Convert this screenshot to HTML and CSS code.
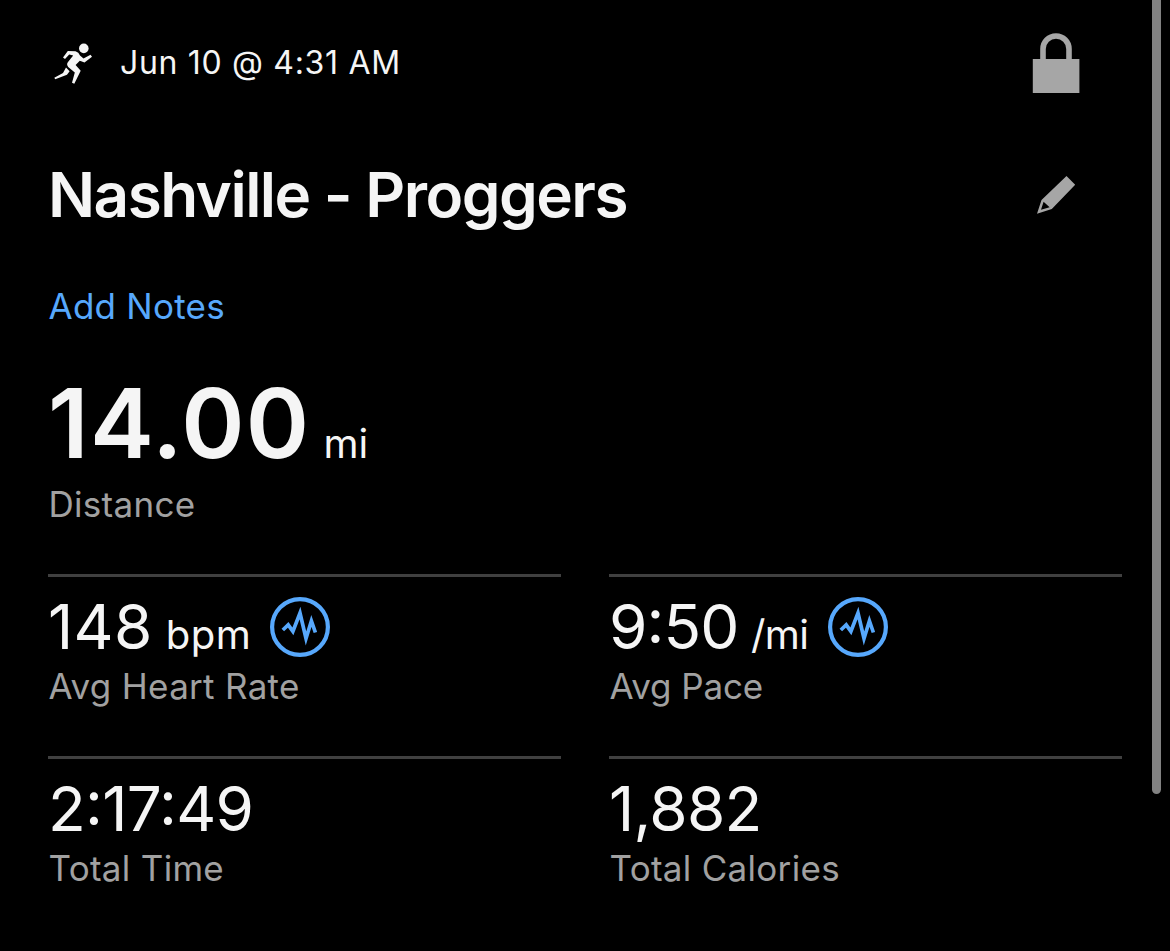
FILE: index.html
```html
<!DOCTYPE html>
<html lang="en">
<head>
<meta charset="utf-8">
<title>Nashville - Proggers</title>
<link rel="stylesheet" href="styles.css">
</head>
<body>
<main class="activity">
  <header class="meta">
    <svg class="runner" viewBox="0 0 70 65" fill="#f5f5f5">
      <circle cx="43.8" cy="17.4" r="4.8"/>
      <path d="M27.8 20 L35.5 20.2 Q38.8 21 40 24.4 L43.5 27.6 L50.5 23.8 L52 25.7 L44.5 31.6 L39.8 29.8 L35.6 34 L40.7 39.7 L34.3 52.7 L32 51.8 L34.8 41.6 L28.2 36 Q26 33.3 28.2 30.8 L33.2 24.4 L29.2 23.4 L25 28 L23 26.5 Z"/>
      <path d="M26 36.6 L29.6 40.2 L27 43.8 L15.2 48.3 L14.3 46.8 L23 42 Z"/>
    </svg>
    <span class="date">Jun 10 @ 4:31 AM</span>
    <svg class="lock" viewBox="0 0 48 60">
      <path d="M11 28 V16 A13 13 0 0 1 37 16 V28" fill="none" stroke="#a6a6a6" stroke-width="5.6"/>
      <rect x=".8" y="26" width="46.6" height="34" fill="#a6a6a6"/>
    </svg>
  </header>
  <div class="heading">
    <h1 class="title">Nashville - Proggers</h1>
    <svg class="pencil" viewBox="0 0 40 40">
      <path fill="#a6a6a6" fill-rule="evenodd" d="M30.5 1 L39.2 9.8 L15.8 34 L1 38.8 L5.5 25 Z M7.6 26.8 L5 34.8 L13.6 32.3 Z"/>
    </svg>
  </div>
  <a class="notes">Add Notes</a>
  <section class="distance">
    <div class="value"><span class="total">14.00</span><span class="unit">mi</span></div>
    <div class="label distance-label">Distance</div>
  </section>
  <section class="stats">
    <div class="stat">
      <div class="value"><span class="number heart">148</span><span class="unit bpm">bpm</span>
        <svg class="pulse" viewBox="0 0 60 60" fill="none" stroke="#57a8fc"><circle cx="30" cy="30" r="27.9" stroke-width="4.2"/><path stroke-width="3.7" d="M12.8 33 L18.2 27.9 L22.9 34.4 L30 16 L36 41.5 L41.4 24 L45.4 35.5"/></svg>
      </div>
      <div class="label">Avg Heart Rate</div>
    </div>
    <div class="stat">
      <div class="value"><span class="number pace">9:50</span><span class="unit per-mile">/mi</span>
        <svg class="pulse" viewBox="0 0 60 60" fill="none" stroke="#57a8fc"><circle cx="30" cy="30" r="27.9" stroke-width="4.2"/><path stroke-width="3.7" d="M12.8 33 L18.2 27.9 L22.9 34.4 L30 16 L36 41.5 L41.4 24 L45.4 35.5"/></svg>
      </div>
      <div class="label pace-label">Avg Pace</div>
    </div>
    <div class="stat">
      <div class="value"><span class="number time">2:17:49</span></div>
      <div class="label">Total Time</div>
    </div>
    <div class="stat">
      <div class="value"><span class="number calories">1,882</span></div>
      <div class="label">Total Calories</div>
    </div>
  </section>
</main>
<div class="scrollbar"></div>
</body>
</html>
```
FILE: styles.css
```css
* { box-sizing: border-box; }
body {
  margin: 0;
  height: 951px;
  overflow: hidden;
  background: #000;
  color: #f5f5f5;
  font-family: Inter, "Liberation Sans", sans-serif;
}
.activity { padding: 30px 48px 0; }
.meta { display: flex; align-items: center; height: 66px; }
.runner { width: 70px; height: 65px; margin-left: -8px; }
.date { margin-left: 10px; font-size: 32px; letter-spacing: 0.68px; line-height: 66px; white-space: nowrap; }
.lock { width: 48px; height: 60px; margin: 0 42px 0 auto; }
.heading { display: flex; align-items: center; justify-content: space-between; height: 80px; margin-top: 59px; }
.title { margin: 0; font-size: 62px; font-weight: 600; line-height: 80px; letter-spacing: -1.52px; white-space: nowrap; }
.pencil { width: 40px; height: 40px; margin-right: 46px; }
.notes { display: block; margin-top: 49px; height: 44px; line-height: 44px; font-size: 35px; letter-spacing: 0.25px; padding-left: 0.5px; color: #57a8fc; }
.distance { margin-top: 45px; }
.value { display: flex; align-items: baseline; white-space: nowrap; }
.total { font-size: 96px; font-weight: 600; line-height: 100px; letter-spacing: 1.3px; }
.unit { margin-left: 13px; font-size: 40px; line-height: 50px; }
.label { height: 44px; margin-top: 7px; padding-left: 0.5px; line-height: 44px; font-size: 35px; letter-spacing: 0.3px; color: #a1a1a1; }
.distance-label { margin-top: 9px; }
.pace-label { letter-spacing: -0.1px; }
.stats { display: grid; grid-template-columns: 1fr 1fr; column-gap: 48px; margin-top: 48px; }
.stat { height: 182px; border-top: 3px solid #404040; padding-top: 20px; }
.stat .value { height: 60px; }
.number { font-size: 62px; line-height: 60px; letter-spacing: -0.7px; }
.heart { letter-spacing: 0.4px; }
.pace { letter-spacing: -0.9px; }
.pace, .time { font-feature-settings: "case"; }
.bpm { margin-left: 13px; letter-spacing: 0.5px; }
.per-mile { margin-left: 12.5px; letter-spacing: -0.6px; }
.pulse { flex: none; align-self: center; width: 60px; height: 60px; margin-left: 18.4px; }
.per-mile + .pulse { margin-left: 20px; }
.scrollbar { position: absolute; top: 0; left: 1152px; width: 9px; height: 794px; border-radius: 0 0 5px 5px; background: #828282; }
```
